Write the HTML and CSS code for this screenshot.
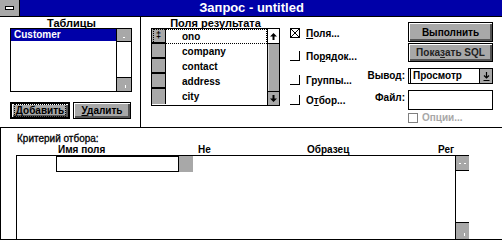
FILE: index.html
```html
<!DOCTYPE html>
<html lang="ru">
<head>
<meta charset="utf-8">
<title>Запрос - untitled</title>
<link rel="stylesheet" href="styles.css">
</head>
<body>
<div class="win">
  <div class="titlebar">
    <div class="sysmenu"><span class="sysbar"></span></div>
    <div class="title">Запрос - untitled</div>
  </div>
  <div class="top">
    <div class="tables">
      <div class="heading">Таблицы</div>
      <div class="listbox tl">
        <div class="items">
          <div class="item sel">Customer</div>
        </div>
        <div class="vscroll">
          <div class="sbtn gray up"><span class="mark"></span></div>
          <div class="track"></div>
          <div class="sbtn gray dn"><span class="mark"></span></div>
        </div>
      </div>
      <div class="btnrow">
        <div class="btn def"><span class="focus"><u>Д</u>обавить</span></div>
        <div class="btn"><span><u>У</u>далить</span></div>
      </div>
    </div>
    <div class="fields">
      <div class="fcol">
        <div class="heading">Поля результата</div>
        <div class="listbox fl">
          <div class="rows">
            <div class="frow focusrow"><span class="ind">‡</span><span class="ftext">ono</span></div>
            <div class="frow"><span class="ind"></span><span class="ftext">company</span></div>
            <div class="frow"><span class="ind"></span><span class="ftext">contact</span></div>
            <div class="frow"><span class="ind"></span><span class="ftext">address</span></div>
            <div class="frow"><span class="ind"></span><span class="ftext">city</span></div>
          </div>
          <div class="vscroll fs">
            <div class="sbtn white up">
              <svg width="9" height="9" viewBox="0 0 9 9"><path d="M4.5 1 L8 4.5 L5.5 4.5 L5.5 8 L3.5 8 L3.5 4.5 L1 4.5 Z" fill="#000"/></svg>
            </div>
            <div class="track gray"></div>
            <div class="sbtn gray dn">
              <svg width="9" height="9" viewBox="0 0 9 9"><path d="M4.5 8 L8 4.5 L5.5 4.5 L5.5 1 L3.5 1 L3.5 4.5 L1 4.5 Z" fill="#000"/></svg>
            </div>
          </div>
        </div>
      </div>
      <div class="checks">
        <div class="chk c1">
          <svg class="box" width="10" height="10" viewBox="0 0 10 10"><rect x="0.5" y="0.5" width="9" height="9" fill="#fff" stroke="#000"/><path d="M1 1 L9 9 M9 1 L1 9" stroke="#000" stroke-width="1"/></svg>
          <span><u>П</u>оля...</span>
        </div>
        <div class="chk c2"><span class="box open"></span><span>По<u>р</u>ядок...</span></div>
        <div class="chk c3"><span class="box open"></span><span>Группы...</span></div>
        <div class="chk c4"><span class="box open"></span><span>О<u>т</u>бор...</span></div>
      </div>
    </div>
    <div class="output">
      <div></div>
      <div class="btn b1"><span>Выполнить</span></div>
      <div></div>
      <div class="btn b2"><span class="dim">Пока<u>з</u>ать SQL</span></div>
      <div class="lbl l1">Вывод:</div>
      <div class="combo">
        <div class="ctext">Просмотр</div>
        <div class="cbtn">
          <svg width="9" height="11" viewBox="0 0 9 11"><path d="M4.5 1 L4.5 7 M2 4.5 L4.5 7 L7 4.5 M1.5 9.5 L7.5 9.5" stroke="#000" stroke-width="1.2" fill="none"/></svg>
        </div>
      </div>
      <div class="lbl l2">Файл:</div>
      <div class="edit"></div>
      <div></div>
      <div class="chk dis"><span class="box gbox"></span><span>Опции...</span></div>
    </div>
  </div>
  <div class="bottom">
    <div class="crit">Критерий отбора:</div>
    <div class="cols">
      <span></span>
      <span>Имя поля</span>
      <span>Не</span>
      <span>Образец</span>
      <span>Рег</span>
    </div>
    <div class="grid">
      <div class="gbody">
        <div class="cellrow"><div class="cell"></div><div class="gcell"></div></div>
      </div>
      <div class="vscroll gs">
        <div class="sbtn gray gtop"><span class="dash"></span><span class="dash"></span></div>
        <div class="track"></div>
        <div class="sbtn gray gbot"><span class="mark"></span></div>
      </div>
    </div>
  </div>
</div>
</body>
</html>
```
FILE: styles.css
```css
html, body {
  margin: 0;
  padding: 0;
  background: #fff;
}
body {
  width: 502px;
  height: 240px;
  overflow: hidden;
  font-family: "Liberation Sans", Arial, sans-serif;
  font-weight: bold;
  font-size: 11px;
  color: #000;
}
u { text-decoration: underline; text-underline-offset: 1px; }

.win {
  width: 502px;
  height: 240px;
  display: flex;
  flex-direction: column;
}

/* title bar */
.titlebar {
  height: 16px;
  background: #0000a8;
  border-bottom: 1px solid #000;
  display: flex;
  flex: none;
}
.sysmenu {
  width: 19px;
  background: #a8a8a8;
  border-right: 1px solid #000;
  display: flex;
  align-items: center;
  justify-content: center;
}
.sysbar {
  width: 7px;
  height: 2px;
  background: #fff;
  border: 1px solid #000;
}
.title {
  flex: 1;
  color: #fff;
  font-size: 13px;
  line-height: 16px;
  text-align: center;
  padding-right: 19px;
}

/* top section */
.top {
  height: 110px;
  border-bottom: 1px solid #000;
  display: flex;
  flex: none;
}
.tables {
  border-right: 1px solid #000;
  padding: 0 7px 0 10px;
  box-sizing: border-box;
  width: 141px;
}
.heading {
  height: 11px;
  line-height: 12px;
  text-align: center;
  font-size: 11px;
}
.listbox {
  border: 1px solid #000;
  display: flex;
  box-sizing: border-box;
}
.tl {
  width: 122px;
  height: 64px;
}
.items { flex: 1; }
.item {
  height: 12px;
  line-height: 12px;
  padding-left: 3px;
  font-size: 10px;
}
.sel { background: #0000a8; color: #fff; }

.vscroll {
  width: 14px;
  border-left: 1px solid #000;
  display: flex;
  flex-direction: column;
}
.sbtn {
  height: 12px;
  display: flex;
  align-items: center;
  justify-content: center;
}
.gray { background: #a8a8a8; }
.white { background: #fff; }
.sbtn.up { border-bottom: 1px solid #000; }
.sbtn.dn { border-top: 1px solid #000; height: 13px; }
.track { flex: 1; }
.mark {
  width: 2px;
  height: 1px;
  background: #fff;
  margin-top: 4px;
}
.tl .dn .mark { width: 1px; height: 3px; margin: 4px 0 0 3px; }

.btnrow {
  display: flex;
  gap: 3px;
  margin-top: 10px;
}
.btn {
  height: 17px;
  background: #a8a8a8;
  border: 1px solid #000;
  box-shadow: inset 1px 1px 0 #fff, inset -2px -2px 0 #545454;
  display: flex;
  align-items: center;
  justify-content: center;
  box-sizing: border-box;
  font-size: 10px;
}
.btnrow .btn { width: 60px; }
.btnrow .btn + .btn { width: 58px; }
.btn.def { border-width: 2px; }
.focus {
  outline: 1px dotted #000;
  outline-offset: 0;
  padding: 0 1px;
}

/* fields */
.fields {
  display: flex;
  padding-left: 10px;
}
.fcol { width: 129px; }
.fl {
  width: 129px;
  height: 78px;
}
.rows { flex: 1; }
.frow {
  height: 15px;
  display: flex;
  position: relative;
}
.ind {
  width: 14px;
  background: #a8a8a8;
  border-right: 1px solid #000;
  border-bottom: 2px solid #000;
  box-sizing: border-box;
  font-size: 9px;
  line-height: 13px;
  text-align: center;
}
.frow:last-child .ind { border-bottom: none; }
.ftext {
  padding-left: 16px;
  line-height: 15px;
  font-size: 10px;
}
.focusrow::after {
  content: "";
  position: absolute;
  left: 1px;
  top: 0;
  right: 0;
  bottom: 0;
  border: 1px dotted #000;
}
.fs { width: 11px; }
.fs .sbtn.up { height: 14px; }
.fs .sbtn.dn { height: 13px; }
.fs .track { box-shadow: inset 1px 0 0 #d8d8d8; }

.checks {
  padding-left: 10px;
  padding-top: 10px;
  display: flex;
  flex-direction: column;
}
.chk {
  display: flex;
  align-items: center;
  height: 12px;
  gap: 6px;
  font-size: 10px;
}
.c2 { margin-top: 11px; }
.c3 { margin-top: 12px; }
.c4 { margin-top: 8px; }
.box {
  width: 10px;
  height: 10px;
  box-sizing: border-box;
  flex: none;
}
.box.open {
  border-right: 1px solid #000;
  border-bottom: 1px solid #000;
}

/* output */
.output {
  margin-left: auto;
  padding: 5px 9px 0 0;
  display: grid;
  grid-template-columns: auto 85px;
  grid-template-rows: 20px 20px 22px 26px 13px;
  column-gap: 3px;
  align-items: end;
  align-content: start;
}
.b1 { height: 20px; align-self: start; }
.b2 { height: 19px; }
.dim { color: #222; }
.lbl {
  text-align: right;
  font-size: 10px;
  line-height: 16px;
}
.l2 { margin-bottom: 4px; }
.combo {
  height: 16px;
  border: 1px solid #000;
  display: flex;
  box-sizing: border-box;
}
.ctext {
  flex: 1;
  border-left: 1px solid #000;
  margin-left: 1px;
  padding-left: 2px;
  line-height: 14px;
  font-size: 10px;
}
.cbtn {
  width: 12px;
  background: #a8a8a8;
  border-left: 1px solid #000;
  display: flex;
  align-items: center;
  justify-content: center;
}
.edit {
  border: 1px solid #000;
  height: 20px;
  box-sizing: border-box;
}
.dis { color: #a8a8a8; gap: 4px; height: 11px; }
.gbox { border: 1px solid #808080; }

/* bottom */
.bottom {
  flex: 1;
  border-left: 1px solid #000;
  border-bottom: 1px solid #000;
  display: flex;
  flex-direction: column;
  min-height: 0;
}
.crit {
  margin: 6px 0 0 16px;
  line-height: 10px;
  height: 10px;
  font-size: 10px;
  font-weight: normal;
  -webkit-text-stroke: 0.3px #000;
}
.cols {
  margin: 1px 0 0 15px;
  display: grid;
  grid-template-columns: 42px 140px 109px 131px 1fr;
  line-height: 10px;
  height: 10px;
  font-size: 10px;
}
.grid {
  margin-left: 15px;
  flex: 1;
  width: 452px;
  border-top: 1px solid #000;
  border-left: 1px solid #000;
  display: flex;
}
.gbody { flex: 1; }
.cellrow {
  display: flex;
  margin-left: 39px;
  height: 16px;
}
.cell {
  width: 123px;
  border: 1px solid #000;
  box-sizing: border-box;
}
.gcell {
  width: 14px;
  background: #a8a8a8;
}
.gs { width: 13px; }
.gtop {
  height: 14px;
  border-bottom: 1px solid #000;
  gap: 3px;
}
.gbot {
  height: 16px;
  border-top: 1px solid #000;
}
.dash {
  width: 2px;
  height: 1px;
  background: #fff;
}
.gbot .mark { width: 1px; height: 3px; margin: 6px 0 0 4px; }
```
